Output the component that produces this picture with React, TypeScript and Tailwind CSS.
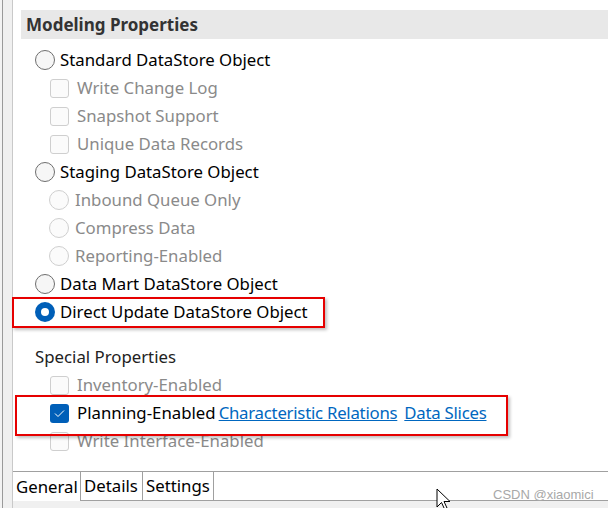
const FONT = "font-['Noto_Sans','Open_Sans',sans-serif]";

function Radio({ state }: { state: "on" | "off" | "disabled" }) {
  if (state === "on")
    return (
      <span className="flex h-[20px] w-[20px] shrink-0 items-center justify-center rounded-full bg-[#005fb8]">
        <span className="h-[8px] w-[8px] rounded-full bg-white" />
      </span>
    );
  return (
    <span
      className={
        state === "off"
          ? "h-[20px] w-[20px] shrink-0 rounded-full border border-[#6e6e6e] bg-[#f6f6f6]"
          : "h-[20px] w-[20px] shrink-0 rounded-full border border-[#cfcfcf] bg-[#fbfbfb]"
      }
    />
  );
}

function Check({ checked }: { checked?: boolean }) {
  if (checked)
    return (
      <span className="flex h-[19px] w-[19px] shrink-0 items-center justify-center rounded-[3px] bg-[#005fb8]">
        <svg width="11" height="9" viewBox="0 0 11 9" fill="none">
          <path d="M1 4.5 L4 7.5 L10 1.5" stroke="white" strokeWidth="1" />
        </svg>
      </span>
    );
  return <span className="h-[19px] w-[19px] shrink-0 rounded-[3px] border border-[#cfcfcf] bg-[#fbfbfb]" />;
}

function Row({ children, indent }: { children: React.ReactNode; indent: string }) {
  return <div className={`flex h-[28px] items-center ${indent}`}>{children}</div>;
}

export default function App() {
  return (
    <div className={`relative flex h-[508px] w-[608px] overflow-hidden bg-white text-[16.8px] ${FONT}`}>
      {/* левая рамка */}
      <div className="w-[2px] bg-[#f3f3f3]" />
      <div className="w-[1px] bg-[#9a9a9a]" />
      <div className="w-[9px] bg-[#f0f0f0]" />
      <div className="w-[1px] bg-[#c9c9c9]" />

      <div className="flex flex-1 flex-col">
        <div className="ml-[8px] mt-[10px] flex h-[29px] items-center bg-[#e8e8e8] pl-[5px] text-[17px] font-bold text-[#333]">
          Modeling Properties
        </div>

        <div className="mt-[7px] flex flex-col text-black">
          <Row indent="pl-[22px] gap-[5px]">
            <Radio state="off" />
            <span>Standard DataStore Object</span>
          </Row>
          <Row indent="pl-[37px] gap-[8px] text-[#8a8a8a]">
            <Check />
            <span>Write Change Log</span>
          </Row>
          <Row indent="pl-[37px] gap-[8px] text-[#8a8a8a]">
            <Check />
            <span>Snapshot Support</span>
          </Row>
          <Row indent="pl-[37px] gap-[8px] text-[#8a8a8a]">
            <Check />
            <span>Unique Data Records</span>
          </Row>
          <Row indent="pl-[22px] gap-[5px]">
            <Radio state="off" />
            <span>Staging DataStore Object</span>
          </Row>
          <Row indent="pl-[36px] gap-[6px] text-[#8a8a8a]">
            <Radio state="disabled" />
            <span>Inbound Queue Only</span>
          </Row>
          <Row indent="pl-[36px] gap-[6px] text-[#8a8a8a]">
            <Radio state="disabled" />
            <span>Compress Data</span>
          </Row>
          <Row indent="pl-[36px] gap-[6px] text-[#8a8a8a]">
            <Radio state="disabled" />
            <span>Reporting-Enabled</span>
          </Row>
          <Row indent="pl-[22px] gap-[5px]">
            <Radio state="off" />
            <span>Data Mart DataStore Object</span>
          </Row>
          <Row indent="pl-[22px] gap-[5px]">
            <Radio state="on" />
            <span>Direct Update DataStore Object</span>
          </Row>

          <div className="mt-[17px] flex h-[28px] items-center pl-[22px] text-[#222]">Special Properties</div>
          <Row indent="pl-[37px] gap-[8px] text-[#8a8a8a]">
            <Check />
            <span>Inventory-Enabled</span>
          </Row>
          <Row indent="pl-[37px] gap-[8px]">
            <Check checked />
            <span>Planning-Enabled</span>
            <span className="-ml-[5px] flex gap-[7px] tracking-[-0.25px] text-[#0067c0] underline">
              <span>Characteristic Relations</span>
              <span>Data Slices</span>
            </span>
          </Row>
          <Row indent="pl-[37px] gap-[8px] text-[#8a8a8a]">
            <Check />
            <span>Write Interface-Enabled</span>
          </Row>
        </div>

        {/* вкладки */}
        <div className="mt-[16px] flex h-[30px] border-t border-[#a0a0a0]">
          <div className="flex w-[67px] items-center bg-white pl-[3px]">General</div>
          <div className="flex w-[62px] items-center border-l border-b border-[#a0a0a0] pl-[3px]">Details</div>
          <div className="flex w-[72px] items-center border-x border-b border-[#a0a0a0] pl-[3px]">Settings</div>
          <div className="flex-1 border-b border-[#a0a0a0]" />
        </div>
        <div className="flex-1 bg-[#f0f0f0]" />
      </div>

      {/* аннотации */}
      <div className="pointer-events-none absolute left-[12px] top-[297px] h-[31px] w-[313px] border-2 border-[#e60000] shadow-[2px_2px_3px_rgba(0,0,0,0.25)]" />
      <div className="pointer-events-none absolute left-[15px] top-[395px] h-[41px] w-[493px] border-2 border-[#e60000] shadow-[2px_2px_3px_rgba(0,0,0,0.25)]" />

      <div className="absolute left-[493px] top-[485px] font-['Liberation_Sans',sans-serif] text-[13px] text-[#a8a8a8]">
        CSDN @xiaomici
      </div>
      <svg className="absolute left-[436px] top-[488px]" width="16" height="22" viewBox="0 0 16 22">
        <path d="M1 1 L1 19 L5.5 14.5 L8.5 21 L11 20 L8 13.5 L14 13.5 Z" fill="white" stroke="black" strokeWidth="1" />
      </svg>
    </div>
  );
}
